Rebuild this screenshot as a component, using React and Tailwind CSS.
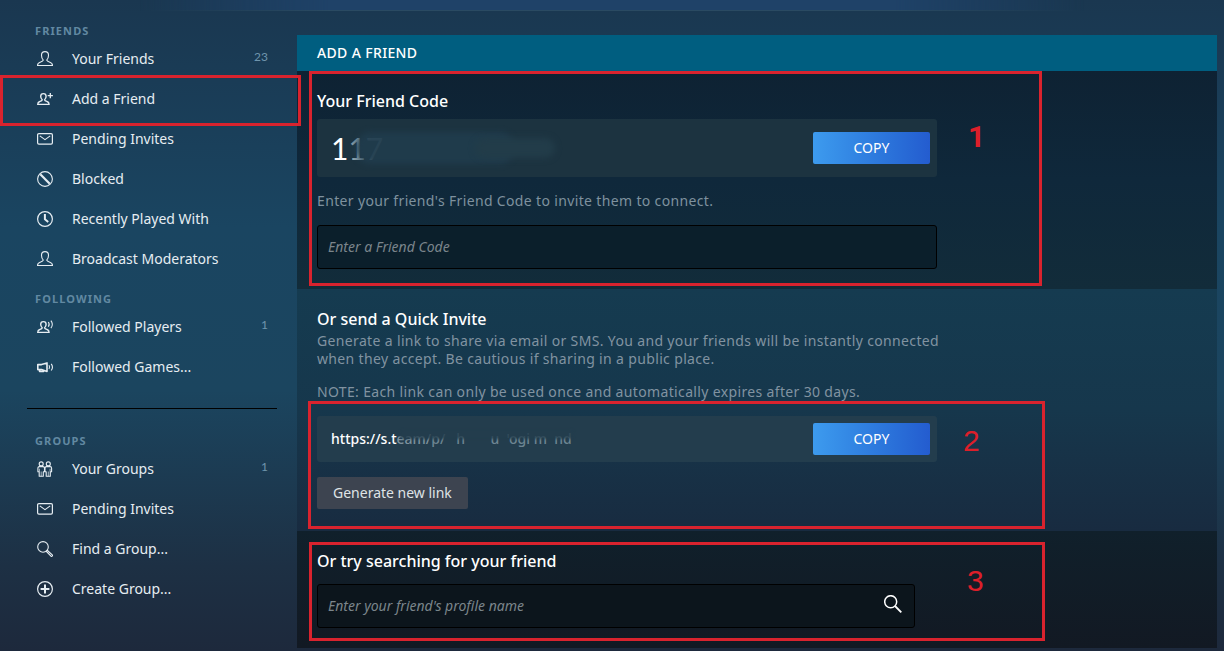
import React from "react";

const Icon = ({ children }) => (
  <svg
    width="16"
    height="16"
    viewBox="0 0 16 16"
    fill="none"
    stroke="currentColor"
    strokeWidth="1.1"
    strokeLinejoin="round"
    className="shrink-0 overflow-visible"
    aria-hidden="true"
  >
    {children}
  </svg>
);

const PersonIcon = () => (
  <Icon>
    <path d="M6.3 9.2C5 8 4.5 6.500 4.500 4.200 4.500 1.900 5.900.6 8 .6s3.500 1.300 3.500 3.600c0 2.300-.5 3.800-1.800 5 .3 1 1.500 1.400 3.200 2 1.700.6 2.600 1.300 2.600 3.300H.5c0-2 .9-2.700 2.600-3.300 1.700-.6 2.900-1 3.200-2z" />
  </Icon>
);

const SmallPerson = () => (
  <path
    strokeWidth="1.400"
    d="M5.200 8.800C4.200 7.900 3.700 6.800 3.700 5.300c0-1.700 1.100-2.700 2.700-2.700s2.700 1 2.700 2.700c0 1.500-.5 2.600-1.500 3.500.2.900 1.100 1.200 2.400 1.700 1.400.5 2.100 1.200 2.100 2.900H.7c0-1.700.7-2.400 2.100-2.900 1.300-.5 2.200-.8 2.400-1.700z"
  />
);

const AddPersonIcon = () => (
  <Icon>
    <SmallPerson />
    <path d="M13.300 2v5.200M10.700 4.600h5.200" strokeWidth="1.300" />
  </Icon>
);

const FollowPersonIcon = () => (
  <Icon>
    <SmallPerson />
    <path d="M11.300 3c1 1.300 1 3.400 0 4.800M13.900 1.600c1.700 2.200 1.700 5.400 0 7.600" />
  </Icon>
);

const MailIcon = () => (
  <Icon>
    <rect x=".6" y="2.600" width="14.800" height="10.500" rx="1.300" strokeWidth="1.200" />
    <path d="M2.800 4.900 8 8.600l5.200-3.700" />
  </Icon>
);

const BlockedIcon = () => (
  <Icon>
    <circle cx="8" cy="8" r="7.400" />
    <path d="m3.300 3.300 9.400 9.400" strokeWidth="2.200" />
  </Icon>
);

const ClockIcon = () => (
  <Icon>
    <circle cx="8" cy="8" r="7.400" strokeWidth="1.200" />
    <path d="M7.900 3v5.300l3.300 2.700" strokeWidth="2" />
  </Icon>
);

const MegaphoneIcon = () => (
  <Icon>
    <path d="M.8 5.600h3.700L10 3.900v8.600l-5.500-1.900H.8zM2.600 10.600v1.900h4v-1.200" strokeWidth="1.600" />
    <path d="M12 6.300c.7 1.100.7 2.600 0 3.700M14.200 4.800c1.500 2 1.500 4.700 0 6.700" />
  </Icon>
);

const GroupIcon = () => (
  <Icon>
    <circle cx="4.200" cy="2.900" r="2" />
    <circle cx="11.300" cy="2.900" r="2" />
    <path d="M2.300 5.600h3.800c1 0 1.400.7 1.400 1.600v3.500H6.300v4.600H2.200v-4.600H.9V7.200c0-.9.4-1.600 1.400-1.600zM9.400 5.600h3.800c1 0 1.400.7 1.400 1.600v3.500h-1.300v4.600H9.200v-4.600H8V7.200c0-.9.4-1.600 1.400-1.600z" />
    <path d="M4.200 10.500v4.800M11.300 10.500v4.800M2.400 7.700v3M13.100 7.700v3" strokeWidth=".7" />
  </Icon>
);

const FindIcon = () => (
  <Icon>
    <circle cx="6" cy="5.900" r="5.300" />
    <path d="m9.500 10.500 1-1 5 4.700c.2.700-.5 1.400-1.300 1.200z" />
  </Icon>
);

const CreateIcon = () => (
  <Icon>
    <circle cx="8" cy="8" r="7.400" strokeWidth="1.200" />
    <path d="M8 3.600v8.800M3.600 8h8.800" strokeWidth="2" />
  </Icon>
);

const sections = [
  {
    title: "FRIENDS",
    items: [
      { label: "Your Friends", icon: PersonIcon, count: 23 },
      { label: "Add a Friend", icon: AddPersonIcon, marked: true },
      { label: "Pending Invites", icon: MailIcon },
      { label: "Blocked", icon: BlockedIcon },
      { label: "Recently Played With", icon: ClockIcon },
      { label: "Broadcast Moderators", icon: PersonIcon },
    ],
  },
  {
    title: "FOLLOWING",
    items: [
      { label: "Followed Players", icon: FollowPersonIcon, count: 1 },
      { label: "Followed Games...", icon: MegaphoneIcon },
    ],
  },
  {
    title: "GROUPS",
    divided: true,
    items: [
      { label: "Your Groups", icon: GroupIcon, count: 1 },
      { label: "Pending Invites", icon: MailIcon },
      { label: "Find a Group...", icon: FindIcon },
      { label: "Create Group...", icon: CreateIcon },
    ],
  },
];

const Sidebar = () => (
  <nav className="w-[297px] shrink-0 pt-[23px]">
    {sections.map((section) => (
      <div key={section.title} className="mb-3">
        {section.divided && <hr className="mt-[21px] mr-5 mb-6 ml-[27px] border-t border-black" />}
        <h2 className="pl-[35px] text-[11px] leading-4 font-bold tracking-widest text-[#6289a2]">
          {section.title}
        </h2>
        <ul>
          {section.items.map((item) => (
            <li key={item.label} className="relative">
              <a href="#" className="flex h-10 items-center pr-[29px] pl-[37px] text-[#e6edf2]">
                <item.icon />
                <span className="ml-[19px] flex-1 text-sm">{item.label}</span>
                {item.count && (
                  <span className="pb-1 font-['Lato',sans-serif] text-xs text-[#6f95ad]">{item.count}</span>
                )}
              </a>
              {item.marked && (
                <div className="pointer-events-none absolute -top-1 -right-1 -bottom-[7px] left-0 z-10 border-3 border-[#d9232e]" />
              )}
            </li>
          ))}
        </ul>
      </div>
    ))}
  </nav>
);

const CopyButton = () => (
  <button
    type="button"
    className="h-8 w-[117px] shrink-0 rounded-[2px] bg-linear-to-r from-[#3d9bee] to-[#245ccf] text-sm text-white"
  >
    COPY
  </button>
);

const Heading = ({ children }) => (
  <h3 className="text-base leading-5 font-medium text-white">{children}</h3>
);

const App = () => (
  <div className="relative min-h-screen bg-[linear-gradient(#1a3750,#1a4561_35%,#1b455f_60%,#1d3044_87%,#1d293c)] font-['Noto_Sans',sans-serif]">
    <div className="absolute inset-x-[140px] top-0 h-[11px] border-b border-[#2a4a62] bg-[#1f4268] mask-x-from-80%" />
    <div className="relative flex">
      <Sidebar />
      <main className="mt-[35px] mr-[7px] min-w-0 flex-1">
        <h1 className="bg-[#005e80] px-5 text-sm leading-9 font-medium tracking-wide text-white">ADD A FRIEND</h1>

        <section className="relative bg-linear-to-b from-[#0e2233] via-[#0f283b] to-[#122c3a] p-5">
          <Heading>Your Friend Code</Heading>
          <div className="mt-2 flex h-[58px] max-w-[620px] items-center justify-between rounded-[3px] bg-[#1c3340] pr-[7px] pl-3.5">
            <div className="relative font-['Lato',sans-serif] text-[30px] text-white">
              1<span className="text-[#8fa5b0]">1</span>
              <span className="text-[#6d8693]">7</span>
              <div className="absolute top-1.5 left-6 h-8 w-40 rounded-full bg-[#203c4d] opacity-90 blur-[3px]" />
              <div className="absolute top-3 left-36 h-5 w-20 rounded-full bg-[#223c49] blur-[3px]" />
            </div>
            <CopyButton />
          </div>
          <label htmlFor="friend-code" className="mt-3.5 block text-sm leading-5 tracking-wide text-[#7e919e]">
            Enter your friend's Friend Code to invite them to connect.
          </label>
          <input
            id="friend-code"
            type="text"
            placeholder="Enter a Friend Code"
            className="mt-3.5 block h-11 w-full max-w-[620px] rounded-[3px] border border-black bg-[#0b1f2b] px-2.5 pb-0.5 text-sm text-white placeholder:text-[#7b858b] placeholder:italic"
          />
          <div className="pointer-events-none absolute top-0 bottom-[3px] left-3 w-[733px] border-3 border-[#d9232e]" />
          <span className="absolute top-12 left-[671px] font-['Roboto',sans-serif] text-[30px] leading-9 font-bold text-[#dc1f2a]">
            1
          </span>
        </section>

        <section className="relative bg-linear-to-b from-[#153b50] via-[#16374c] to-[#182b40] px-5 pt-5 pb-[22px]">
          <Heading>Or send a Quick Invite</Heading>
          <div className="mt-[3px] max-w-[640px] text-sm leading-[18px] tracking-wide text-[#8193a1]">
            <p>
              Generate a link to share via email or SMS. You and your friends will be instantly connected
              when they accept. Be cautious if sharing in a public place.
            </p>
            <p className="mt-[15px]">
              NOTE: Each link can only be used once and automatically expires after 30 days.
            </p>
          </div>
          <div className="mt-[15px] flex h-[46px] max-w-[620px] items-center justify-between rounded-[3px] bg-[#233d4d] pr-[7px] pl-3.5">
            <div className="relative text-sm font-medium whitespace-pre text-white">
              https://s.t<span className="text-[#7d929e]">eam/</span>
              <span className="text-[#6d8592]">p/   h       u  'ogi m  nd</span>
              <div className="absolute top-0 left-[68px] h-2.5 w-[176px] rounded-full bg-[#233d4d] opacity-80 blur-[1px]" />
            </div>
            <CopyButton />
          </div>
          <button
            type="button"
            className="mt-[15px] block h-8 rounded-[2px] bg-[#3d4450] px-4 text-sm text-[#dfe3e6]"
          >
            Generate new link
          </button>
          <div className="pointer-events-none absolute top-[112px] bottom-0.5 left-[11px] w-[737px] border-3 border-[#d9232e]" />
          <span className="absolute top-[134px] left-[666px] font-['Liberation_Sans',sans-serif] text-[30px] leading-9 text-[#dc1f2a]">
            2
          </span>
        </section>

        <section className="relative bg-linear-to-b from-[#10202b] to-[#121923] p-5">
          <Heading>
            <label htmlFor="profile-name">Or try searching for your friend</label>
          </Heading>
          <div className="mt-[13px] flex h-11 max-w-[598px] items-center rounded-[3px] border border-black bg-[#0c151c] pr-3 pl-2.5">
            <input
              id="profile-name"
              type="text"
              placeholder="Enter your friend's profile name"
              className="h-full min-w-0 flex-1 pb-0.5 text-sm text-white placeholder:text-[#7b858b] placeholder:italic"
            />
            <button type="button" aria-label="Search" className="mb-1 text-white">
              <svg width="18" height="18" viewBox="0 0 18 18" fill="none" stroke="currentColor" strokeWidth="1.500">
                <circle cx="6.700" cy="6.700" r="6" />
                <path d="m11 11 6.300 6.300" strokeWidth="1.800" />
              </svg>
            </button>
          </div>
          <div className="pointer-events-none absolute top-[11px] bottom-[7px] left-3 w-[736px] border-3 border-[#d9232e]" />
          <span className="absolute top-8 left-[670px] font-['Liberation_Sans',sans-serif] text-[30px] leading-9 text-[#dc1f2a]">
            3
          </span>
        </section>
      </main>
    </div>
  </div>
);

export default App;
